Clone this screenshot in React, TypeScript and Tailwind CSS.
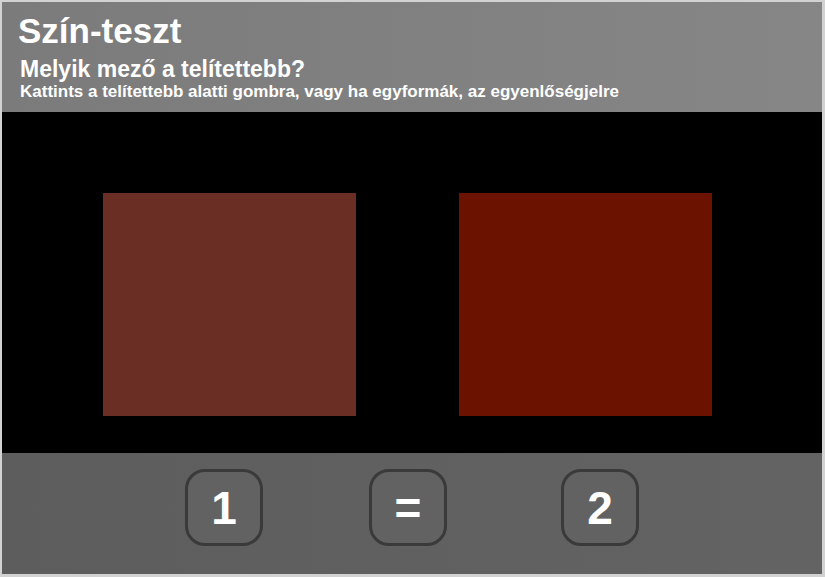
export default function App() {
  const btn =
    "w-[78px] h-[77px] rounded-[20px] border-[3px] border-[#3a3a3a] bg-[#626262] flex items-center justify-center text-white font-bold text-[46px] leading-none";
  return (
    <div
      className="w-[825px] h-[577px] border-t-2 border-l-2 border-r-[3px] border-b-[3px] border-[#d2d2d2] flex flex-col overflow-hidden"
      style={{ fontFamily: '"Liberation Sans", Arial, sans-serif' }}
    >
      <div className="h-[110px] bg-gradient-to-r from-[#7b7b7b] to-[#868686] pl-[16px] pt-[9px] text-white font-bold">
        <div className="text-[35px] leading-[40px]">Szín-teszt</div>
        <div className="text-[23px] leading-[26px] mt-[5px] pl-[2px]">Melyik mező a telítettebb?</div>
        <div className="text-[17px] leading-[19px] pl-[2px]">
          Kattints a telítettebb alatti gombra, vagy ha egyformák, az egyenlőségjelre
        </div>
      </div>
      <div className="h-[341px] bg-black flex pt-[81px] pl-[101px]">
        <div className="w-[253px] h-[223px] bg-[#6a2e24]" />
        <div className="w-[253px] h-[223px] bg-[#6b1200] ml-[103px]" />
      </div>
      <div className="h-[121px] bg-gradient-to-r from-[#5d5d5d] to-[#636363] flex pt-[16px] pl-[183px]">
        <div className={btn}>1</div>
        <div className={btn + " ml-[106px]"}>=</div>
        <div className={btn + " ml-[114px]"}>2</div>
      </div>
    </div>
  );
}
